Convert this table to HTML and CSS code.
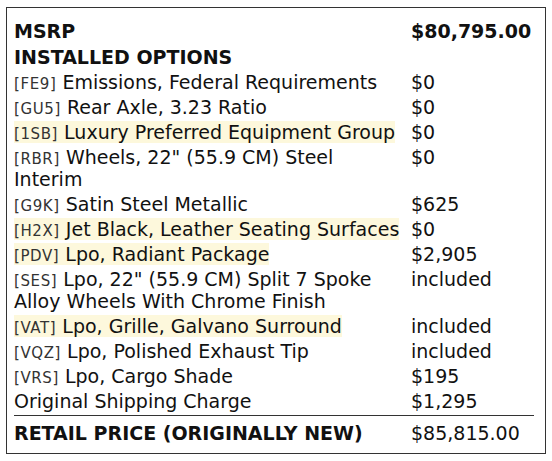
FILE: index.html
```html
<!DOCTYPE html>
<html>
<head>
<meta charset="utf-8">
<link rel="stylesheet" href="styles.css">
</head>
<body>
<div class="sticker">
  <table class="price-table">
    <colgroup><col class="col-desc"><col class="col-price"></colgroup>
    <tr class="head first"><td>MSRP</td><td>$80,795.00</td></tr>
    <tr class="head"><td colspan="2">INSTALLED OPTIONS</td></tr>
    <tr><td><span class="code">[FE9]</span> Emissions, Federal Requirements</td><td>$0</td></tr>
    <tr><td><span class="code">[GU5]</span> Rear Axle, 3.23 Ratio</td><td>$0</td></tr>
    <tr><td><span class="hl"><span class="code">[1SB]</span> Luxury Preferred Equipment Group</span></td><td>$0</td></tr>
    <tr><td><span class="code">[RBR]</span> Wheels, 22" (55.9 CM) Steel Interim</td><td>$0</td></tr>
    <tr><td><span class="code">[G9K]</span> Satin Steel Metallic</td><td>$625</td></tr>
    <tr><td><span class="hl nowrap"><span class="code">[H2X]</span> Jet Black, Leather Seating Surfaces</span></td><td>$0</td></tr>
    <tr><td><span class="hl"><span class="code">[PDV]</span> Lpo, Radiant Package</span></td><td>$2,905</td></tr>
    <tr><td><span class="code">[SES]</span> Lpo, 22" (55.9 CM) Split 7 Spoke Alloy Wheels With Chrome Finish</td><td>included</td></tr>
    <tr><td><span class="hl"><span class="code">[VAT]</span> Lpo, Grille, Galvano Surround</span></td><td>included</td></tr>
    <tr><td><span class="code">[VQZ]</span> Lpo, Polished Exhaust Tip</td><td>included</td></tr>
    <tr><td><span class="code">[VRS]</span> Lpo, Cargo Shade</td><td>$195</td></tr>
    <tr class="last"><td>Original Shipping Charge</td><td>$1,295</td></tr>
    <tr class="total"><td>RETAIL PRICE (ORIGINALLY NEW)</td><td>$85,815.00</td></tr>
  </table>
</div>
</body>
</html>
```
FILE: styles.css
```css
html, body {
  margin: 0;
  padding: 0;
  background: #fff;
}
body {
  padding: 7px 6px;
  font-family: "DejaVu Sans", sans-serif;
  color: #111;
}
.sticker {
  border: 1px solid #333;
  padding: 11px 11px 0 7px;
  box-sizing: border-box;
  width: 540px;
  height: 447px;
}
.price-table {
  border-collapse: collapse;
  width: 520px;
  table-layout: fixed;
  font-size: 19px;
}
.col-desc { width: 397px; }
.price-table td {
  padding: 1px 0 2px 0;
  line-height: 22px;
  vertical-align: top;
}
.price-table td:first-child { padding-right: 12px; }
.head td { font-weight: bold; }
.first td { padding-bottom: 3px; }
.code {
  font-size: 15px;
  line-height: 15px;
  letter-spacing: 0.6px;
  color: #333;
}
.hl { background: #fdf8dc; }
.nowrap { white-space: nowrap; }
.last td { border-bottom: 1px solid #333; padding-bottom: 3px; }
.total td { padding-top: 6px; }
.total td:first-child { font-weight: bold; }
```
